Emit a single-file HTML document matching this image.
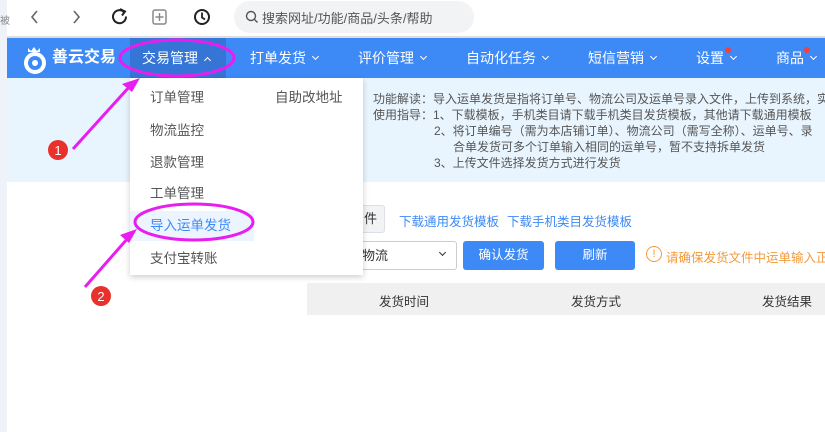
<!DOCTYPE html>
<html><head><meta charset="utf-8"><style>
*{margin:0;padding:0;box-sizing:border-box}
body{width:825px;height:432px;overflow:hidden;background:#fff;font-family:"Liberation Sans","Noto Sans CJK SC",sans-serif;position:relative;color:#333}
.a{position:absolute;white-space:nowrap}
.nav{position:absolute;left:7px;top:38px;width:818px;height:40px;background:#3d8af7}
.ni{position:absolute;top:0;height:40px;line-height:40px;color:#fff;font-size:14px}
.chev{display:inline-block;width:5px;height:5px;border-right:1.6px solid #fff;border-bottom:1.6px solid #fff;transform:rotate(45deg);margin-left:7px;vertical-align:4px}
.up{transform:rotate(-135deg);vertical-align:0}
.dot{position:absolute;width:6px;height:6px;border-radius:3px;background:#f0413f}
.mi{position:absolute;left:150px;font-size:13.5px;color:#555}
.desc{font-size:12px;color:#555;line-height:16px}
.btn{position:absolute;height:29px;background:#3d8af7;border-radius:3px;color:#fff;font-size:12.5px;text-align:center;line-height:29px}
</style></head><body>
<div class="a" style="left:0;top:0;width:7px;height:432px;background:#eff3f9"></div>
<div class="a" style="left:0;top:12px;font-size:10px;color:#888">被</div>
<svg class="a" style="left:0;top:0" width="240" height="36">
<path d="M37 11l-5 6 5 6" stroke="#666" stroke-width="1.6" fill="none"/>
<path d="M74 11l5 6-5 6" stroke="#666" stroke-width="1.6" fill="none"/>
<path d="M124 12a6.5 6.5 0 1 0 2 4.5" stroke="#222" stroke-width="2" fill="none"/><path d="M120 9l5 2.5-3 4" stroke="#222" stroke-width="2" fill="none"/>
<rect x="153" y="10" width="13" height="14" rx="2" stroke="#888" stroke-width="1.5" fill="none"/><path d="M159.5 13v8M155.5 17h8" stroke="#888" stroke-width="1.4"/>
<circle cx="202" cy="17" r="7" stroke="#222" stroke-width="2" fill="none"/><path d="M202 12.5v5l3 2" stroke="#222" stroke-width="1.8" fill="none"/>
</svg>
<div class="a" style="left:234px;top:1px;width:240px;height:32px;border-radius:16px;background:#f1f3f4"></div>
<svg class="a" style="left:245px;top:10px" width="14" height="14"><circle cx="6" cy="6" r="4.5" stroke="#555" stroke-width="1.4" fill="none"/><path d="M9.5 9.5l3 3" stroke="#555" stroke-width="1.4"/></svg>
<div class="a" style="left:262px;top:8px;font-size:13px;color:#555">搜索网址/功能/商品/头条/帮助</div>
<div class="a" style="left:7px;top:36px;width:818px;height:2px;background:#ddd"></div>
<div class="nav">
<svg class="a" style="left:15px;top:6px" width="30" height="30"><path d="M6 4l3 3 3-4 3 4 3-3v4H6z" fill="#fff"/><circle cx="13" cy="19" r="9" fill="none" stroke="#fff" stroke-width="4"/><circle cx="13" cy="19" r="3" fill="#fff"/></svg>
<div class="ni" style="left:45px;font-size:16px;font-weight:bold">善云交易</div>
<div class="a" style="left:123px;top:0;width:96px;height:40px;background:#3575d6"></div>
<div class="ni" style="left:135px">交易管理<span class="chev up"></span></div>
<div class="ni" style="left:243px">打单发货<span class="chev"></span></div>
<div class="ni" style="left:351px">评价管理<span class="chev"></span></div>
<div class="ni" style="left:459px">自动化任务<span class="chev"></span></div>
<div class="ni" style="left:581px">短信营销<span class="chev"></span></div>
<div class="ni" style="left:689px">设置<span class="chev"></span></div>
<div class="dot" style="left:718px;top:9px"></div>
<div class="ni" style="left:769px">商品<span class="chev"></span></div>
<div class="dot" style="left:797px;top:9px"></div>
</div>
<div class="a" style="left:7px;top:78px;width:818px;height:104px;background:#e9f5fe"></div>
<div class="a desc" style="left:373px;top:91px">功能解读：导入运单发货是指将订单号、物流公司及运单号录入文件，上传到系统，实</div>
<div class="a desc" style="left:373px;top:107px">使用指导：1、下载模板，手机类目请下载手机类目发货模板，其他请下载通用模板</div>
<div class="a desc" style="left:434px;top:123px">2、将订单编号（需为本店铺订单）、物流公司（需写全称）、运单号、录</div>
<div class="a desc" style="left:453px;top:139px">合单发货可多个订单输入相同的运单号，暂不支持拆单发货</div>
<div class="a desc" style="left:434px;top:155px">3、上传文件选择发货方式进行发货</div>
<div class="a" style="left:330px;top:205px;width:55px;height:28px;background:#f2f3f5;border:1px solid #dcdfe6;border-radius:3px;font-size:13px;line-height:26px;padding-left:33px">件</div>
<div class="a" style="left:399px;top:211px;font-size:12.5px;color:#3d8af7">下载通用发货模板</div>
<div class="a" style="left:507px;top:211px;font-size:12.5px;color:#3d8af7">下载手机类目发货模板</div>
<div class="a" style="left:330px;top:241px;width:127px;height:29px;background:#fff;border:1px solid #ccc;border-radius:3px;font-size:13px;line-height:27px;padding-left:31px">物流</div>
<div class="a" style="left:440px;top:250px;width:5px;height:5px;border-right:1.5px solid #333;border-bottom:1.5px solid #333;transform:rotate(45deg)"></div>
<div class="btn" style="left:463px;top:241px;width:81px">确认发货</div>
<div class="btn" style="left:555px;top:241px;width:80px">刷新</div>
<div class="a" style="left:646px;top:246px;width:16px;height:16px;border:1.3px solid #f39a3b;border-radius:8px;color:#f39a3b;font-size:11px;text-align:center;line-height:14px">!</div>
<div class="a" style="left:666px;top:247px;font-size:12.5px;color:#f39a3b">请确保发货文件中运单输入正确</div>
<div class="a" style="left:307px;top:283px;width:518px;height:32px;background:#f0f0f0"></div>
<div class="a" style="left:379px;top:291px;font-size:12.5px;color:#333">发货时间</div>
<div class="a" style="left:571px;top:291px;font-size:12.5px;color:#333">发货方式</div>
<div class="a" style="left:762px;top:291px;font-size:12.5px;color:#333">发货结果</div>
<div class="a" style="left:130px;top:78px;width:233px;height:197px;background:#fff;box-shadow:0 2px 6px rgba(0,0,0,.2)"></div>
<div class="a" style="left:130px;top:211px;width:124px;height:30px;background:#ecf5ff"></div>
<div class="mi" style="top:86px">订单管理</div>
<div class="mi" style="left:275px;top:86px">自助改地址</div>
<div class="mi" style="top:119px">物流监控</div>
<div class="mi" style="top:151px">退款管理</div>
<div class="mi" style="top:182px">工单管理</div>
<div class="mi" style="top:214px;color:#3d8af7">导入运单发货</div>
<div class="mi" style="top:247px">支付宝转账</div>
<svg class="a" style="left:0;top:0" width="825" height="432">
<ellipse cx="177" cy="58" rx="57" ry="18" fill="none" stroke="#e81ef0" stroke-width="3"/>
<ellipse cx="194" cy="222" rx="59" ry="18" fill="none" stroke="#e81ef0" stroke-width="3"/>
<path d="M73 149L130 86" stroke="#e81ef0" stroke-width="3"/>
<path d="M140 78l-18 6 10 8z" fill="#e81ef0"/>
<path d="M85 287L128 238" stroke="#e81ef0" stroke-width="3"/>
<path d="M137 229l-17 6 9 8z" fill="#e81ef0"/>
<circle cx="58" cy="150" r="10" fill="#e8302c"/>
<text x="58" y="155" font-size="13" fill="#fff" text-anchor="middle" font-family="Liberation Sans">1</text>
<circle cx="101" cy="296" r="10" fill="#e8302c"/>
<text x="101" y="301" font-size="13" fill="#fff" text-anchor="middle" font-family="Liberation Sans">2</text>
</svg>
</body></html>
